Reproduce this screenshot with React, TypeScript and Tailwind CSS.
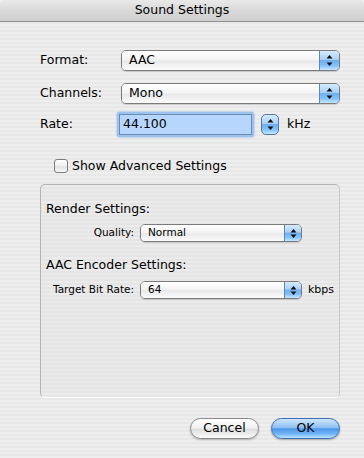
import React from 'react';

const font = { fontFamily: '"DejaVu Sans", "Lucida Grande", sans-serif' };

// Aqua up/down arrow glyph pair
const Arrows = ({ small }: { small?: boolean }) => (
  <svg width="7" height={small ? 11 : 13} viewBox={small ? '0 0 7 11' : '0 0 7 13'}>
    <path d="M3.5 1 L6.5 4.5 L0.5 4.5 Z" fill="#111" />
    <path d={small ? 'M3.5 10 L6.5 6.5 L0.5 6.5 Z' : 'M3.5 12 L6.5 8.5 L0.5 8.5 Z'} fill="#111" />
  </svg>
);

const AquaBlue =
  'bg-[linear-gradient(180deg,#d6ebfd_0%,#a9d0f7_45%,#6fb0f1_50%,#7fc0fb_75%,#c6e6ff_100%)]';

const Popup = ({ value, width, small }: { value: string; width: string; small?: boolean }) => (
  <div
    className={`${width} ${small ? 'h-[18px] text-[10.5px]' : 'h-[21px] text-[12.5px]'} flex items-stretch rounded-[5px] border border-[#7b7b7b] shadow-[0_1px_1px_rgba(0,0,0,0.15)] overflow-hidden`}
  >
    <div className="flex-1 flex items-center pl-[7px] bg-[linear-gradient(180deg,#ffffff_0%,#f4f4f4_45%,#e9e9e9_55%,#fbfbfb_100%)] text-black">
      {value}
    </div>
    <div className={`${small ? 'w-[17px]' : 'w-[20px]'} flex items-center justify-center border-l border-[#5d88b8] ${AquaBlue}`}>
      <Arrows small={small} />
    </div>
  </div>
);

export default function App() {
  return (
    <div
      style={font}
      className="w-[364px] h-[458px] overflow-hidden text-black bg-[repeating-linear-gradient(180deg,#eeeeee_0px,#eeeeee_2px,#e8e8e8_2px,#e8e8e8_4px)]"
    >
      {/* title bar */}
      <div className="h-[22px] flex items-center justify-center text-[12.5px] rounded-t-[5px] border-b border-[#8f8f8f] bg-[linear-gradient(180deg,#e9e9e9_0%,#d9d9d9_50%,#cfcfcf_100%)]">
        Sound Settings
      </div>

      {/* Format */}
      <div className="mt-[28px] h-[21px] flex items-center pl-[40px] text-[12.5px]">
        <div className="w-[81px]">Format:</div>
        <Popup value="AAC" width="w-[219px]" />
      </div>

      {/* Channels */}
      <div className="mt-[12px] h-[21px] flex items-center pl-[40px] text-[12.5px]">
        <div className="w-[81px]">Channels:</div>
        <Popup value="Mono" width="w-[219px]" />
      </div>

      {/* Rate */}
      <div className="mt-[8px] h-[25px] flex items-center pl-[40px] text-[12.5px]">
        <div className="w-[77px]">Rate:</div>
        <div className="w-[137px] h-[25px] rounded-[3px] bg-[#9cc2ef] p-[2px] shadow-[0_0_2px_#6ea3e6]">
          <div className="w-full h-full border border-[#6b8bb0] bg-[#b6d6fd] flex items-center pl-[3px]">44.100</div>
        </div>
        <div className={`ml-[7px] w-[18px] h-[21px] rounded-[5px] border border-[#5577a3] flex items-center justify-center ${AquaBlue}`}>
          <Arrows />
        </div>
        <div className="ml-[8px]">kHz</div>
      </div>

      {/* checkbox */}
      <div className="mt-[22px] h-[14px] flex items-center pl-[54px] text-[12.5px]">
        <div className="w-[14px] h-[14px] rounded-[3px] border border-[#7d7d7d] bg-[linear-gradient(180deg,#ffffff_0%,#eeeeee_50%,#e2e2e2_55%,#f7f7f7_100%)]" />
        <div className="ml-[4px]">Show Advanced Settings</div>
      </div>

      {/* group box */}
      <div className="mt-[11px] ml-[40px] w-[300px] h-[214px] rounded-[5px] border border-[#b4b4b4] border-b-[#ffffff] border-r-[#c8c8c8] bg-[repeating-linear-gradient(180deg,#ebebeb_0px,#ebebeb_2px,#e5e5e5_2px,#e5e5e5_4px)] pt-[16px] pl-[5px]">
        <div className="h-[16px] flex items-center text-[12.5px]">Render Settings:</div>
        <div className="mt-[7px] h-[18px] flex items-center text-[10.5px]">
          <div className="w-[88px] text-right">Quality:</div>
          <div className="ml-[6px]">
            <Popup value="Normal" width="w-[162px]" small />
          </div>
        </div>
        <div className="mt-[15px] h-[16px] flex items-center text-[12.5px]">AAC Encoder Settings:</div>
        <div className="mt-[8px] h-[18px] flex items-center text-[10.5px]">
          <div className="w-[88px] text-right">Target Bit Rate:</div>
          <div className="ml-[6px]">
            <Popup value="64" width="w-[162px]" small />
          </div>
          <div className="ml-[6px] text-[11px]">kbps</div>
        </div>
      </div>

      {/* buttons */}
      <div className="mt-[20px] flex justify-end pr-[24px] gap-[12px] text-[12.5px]">
        <button className="w-[69px] h-[21px] rounded-full border border-[#8a8a8a] shadow-[0_1px_2px_rgba(0,0,0,0.25)] bg-[linear-gradient(180deg,#ffffff_0%,#f2f2f2_45%,#dedede_55%,#fbfbfb_100%)] flex items-center justify-center">
          Cancel
        </button>
        <button className="w-[69px] h-[21px] rounded-full border border-[#3c6fb3] shadow-[0_1px_2px_rgba(0,0,0,0.3)] bg-[linear-gradient(180deg,#cfe6fd_0%,#8fc0f2_45%,#4d97ea_52%,#6fb4f7_78%,#bfe3ff_100%)] flex items-center justify-center">
          OK
        </button>
      </div>
    </div>
  );
}
